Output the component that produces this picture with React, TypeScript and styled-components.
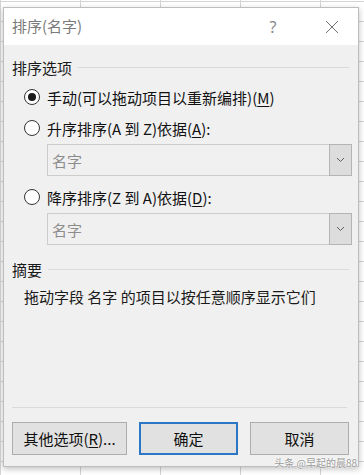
import React from "react";
import styled, { createGlobalStyle } from "styled-components";

const Global = createGlobalStyle`
  html, body { margin: 0; padding: 0; }
  body {
    width: 364px;
    height: 475px;
    overflow: hidden;
    background-color: #ffffff;
    background-image:
      linear-gradient(to bottom, #d4d4d4 1px, transparent 1px),
      linear-gradient(to right, #d4d4d4 1px, transparent 1px);
    background-size: 100% 20px, 80px 100%;
    background-position: 0 1px, 0 0;
    font-family: "Noto Sans CJK SC", "Noto Sans", sans-serif;
  }
`;

const Page = styled.div`
  position: relative;
  width: 364px;
  height: 475px;
  padding: 7px 0 0 3px;
  box-sizing: border-box;
`;

const Dialog = styled.div`
  width: 356px;
  height: 460px;
  box-sizing: border-box;
  background: #f0f0f0;
  border: 1px solid #bdbdbd;
  box-shadow: 0 2px 6px rgba(0, 0, 0, 0.25);
  display: flex;
  flex-direction: column;
`;

const TitleBar = styled.div`
  height: 37px;
  background: #ffffff;
  display: flex;
  align-items: center;
  padding: 0 0 0 8px;
  flex: none;
`;

const Title = styled.div`
  flex: 1;
  font-size: 15px;
  color: #7a7a7a;
  line-height: 20px;
  margin-top: -1px;
`;

const Help = styled.div`
  width: 20px;
  font-size: 16px;
  color: #888;
  font-family: "Noto Sans", sans-serif;
  text-align: center;
  margin-right: 42px;
`;

const CloseBtn = styled.div`
  width: 14px;
  height: 14px;
  margin-right: 19px;
  display: flex;
`;

const Body = styled.div`
  flex: 1;
  display: flex;
  flex-direction: column;
  padding: 0 9px 0 8px;
`;

const GroupHeader = styled.div<{ $top: number }>`
  display: flex;
  align-items: center;
  margin-top: ${(p) => p.$top}px;
  height: 20px;
  font-size: 15px;
  color: #1a1a1a;
  gap: 6px;
  &::after {
    content: "";
    flex: 1;
    height: 1px;
    background: #dadada;
  }
`;

const RadioRow = styled.div<{ $top: number }>`
  display: flex;
  align-items: center;
  margin-top: ${(p) => p.$top}px;
  margin-left: 12px;
  height: 20px;
  font-size: 15px;
  color: #111;
  gap: 7px;
`;

const RadioCircle = styled.span<{ $checked?: boolean }>`
  width: 16px;
  height: 16px;
  box-sizing: border-box;
  border-radius: 50%;
  border: 1px solid #333;
  background: #fff;
  display: flex;
  align-items: center;
  justify-content: center;
  flex: none;
  &::after {
    content: "";
    width: 8px;
    height: 8px;
    border-radius: 50%;
    background: ${(p) => (p.$checked ? "#1a1a1a" : "transparent")};
  }
`;

const U = styled.span`
  text-decoration: underline;
  text-underline-offset: 2px;
`;

const Select = styled.div<{ $top: number }>`
  margin-top: ${(p) => p.$top}px;
  margin-left: 35px;
  width: 305px;
  height: 32px;
  box-sizing: border-box;
  border: 1px solid #cccccc;
  background: #f0f0f0;
  display: flex;
  align-items: stretch;
`;

const SelectText = styled.div`
  flex: 1;
  display: flex;
  align-items: center;
  padding-left: 4px;
  font-size: 15px;
  color: #8c8c8c;
`;

const SelectArrow = styled.div`
  width: 21px;
  background: #dddddd;
  border: 1px solid #b4b4b4;
  margin: -1px -1px -1px 0;
  display: flex;
  align-items: center;
  justify-content: center;
`;

const Summary = styled.div`
  margin-top: 8px;
  margin-left: 12px;
  font-size: 15px;
  color: #1a1a1a;
  height: 20px;
  line-height: 20px;
`;

const Spacer = styled.div`
  flex: 1;
`;

const Separator = styled.div`
  height: 1px;
  background: #dadada;
  margin: 0 2px 0 0;
`;

const Buttons = styled.div`
  display: flex;
  justify-content: space-between;
  margin: 14px 0 11px 0;
`;

const Button = styled.div<{ $w: number; $default?: boolean }>`
  width: ${(p) => p.$w}px;
  height: 33px;
  box-sizing: border-box;
  background: #e1e1e1;
  border: ${(p) => (p.$default ? "2px solid #2b77c5" : "1px solid #adadad")};
  display: flex;
  align-items: center;
  justify-content: center;
  font-size: 15px;
  color: #111;
`;

const Watermark = styled.div`
  position: absolute;
  right: 7px;
  bottom: 5px;
  font-size: 10px;
  color: #9a9a9a;
  text-shadow: 0 0 2px #fff, 0 0 2px #fff;
`;

const Chevron = () => (
  <svg width="9" height="6" viewBox="0 0 9 6">
    <path d="M1 1 L4.5 4.5 L8 1" fill="none" stroke="#606060" strokeWidth="1" />
  </svg>
);

export default function App() {
  return (
    <>
      <Global />
      <Page>
        <Dialog>
          <TitleBar>
            <Title>排序(名字)</Title>
            <Help>?</Help>
            <CloseBtn>
              <svg width="14" height="14" viewBox="0 0 14 14">
                <path d="M1 1 L13 13 M13 1 L1 13" stroke="#707070" strokeWidth="1" />
              </svg>
            </CloseBtn>
          </TitleBar>
          <Body>
            <GroupHeader $top={12}>排序选项</GroupHeader>
            <RadioRow $top={10}>
              <RadioCircle $checked />
              <span>
                手动(可以拖动项目以重新编排)(<U>M</U>)
              </span>
            </RadioRow>
            <RadioRow $top={11}>
              <RadioCircle />
              <span>
                升序排序(A 到 Z)依据(<U>A</U>):
              </span>
            </RadioRow>
            <Select $top={6}>
              <SelectText>名字</SelectText>
              <SelectArrow>
                <Chevron />
              </SelectArrow>
            </Select>
            <RadioRow $top={11}>
              <RadioCircle />
              <span>
                降序排序(Z 到 A)依据(<U>D</U>):
              </span>
            </RadioRow>
            <Select $top={6}>
              <SelectText>名字</SelectText>
              <SelectArrow>
                <Chevron />
              </SelectArrow>
            </Select>
            <GroupHeader $top={14}>摘要</GroupHeader>
            <Summary>拖动字段 名字 的项目以按任意顺序显示它们</Summary>
            <Spacer />
            <Separator />
            <Buttons>
              <Button $w={115}>
                其他选项(<U>R</U>)...
              </Button>
              <Button $w={99} $default>
                确定
              </Button>
              <Button $w={99}>取消</Button>
            </Buttons>
          </Body>
        </Dialog>
        <Watermark>头条 @早起的晨88</Watermark>
      </Page>
    </>
  );
}
